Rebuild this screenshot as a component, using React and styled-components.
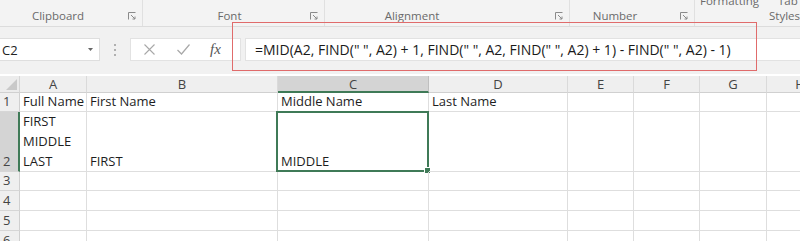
import React from "react";
import styled, { createGlobalStyle } from "styled-components";

const Global = createGlobalStyle`
  html, body { margin: 0; padding: 0; background: #fff; }
  body { font-family: "Open Sans", "Noto Sans", sans-serif; }
`;

const Page = styled.div`
  position: relative;
  width: 800px;
  height: 241px;
  overflow: hidden;
  background: #fff;
`;

const Ribbon = styled.div`
  display: flex;
  height: 26px;
  background: #f3f3f3;
  border-bottom: 1px solid #dcdcdc;
`;

const Group = styled.div`
  position: relative;
  flex: 0 0 ${(p) => p.$w}px;
  display: flex;
  align-items: flex-end;
  justify-content: center;
  padding-bottom: 3px;
  box-sizing: border-box;
  border-right: ${(p) => (p.$last ? "none" : "1px solid #e0e0e0")};
  color: #6a6a6a;
  font-size: 11.5px;
`;

const GroupLabel = styled.span`
  flex-shrink: 0;
  white-space: nowrap;
  line-height: 14px;
  margin-left: ${(p) => p.$shift || 0}px;
`;

const Launcher = styled.svg`
  position: absolute;
  right: 6px;
  bottom: 6px;
`;

const TopText = styled.span`
  position: absolute;
  top: -6px;
  left: ${(p) => p.$x}px;
  white-space: nowrap;
  font-size: 11.5px;
  color: #6a6a6a;
  line-height: 14px;
`;

const FormulaBar = styled.div`
  display: flex;
  align-items: center;
  height: 47px;
  padding-bottom: 2px;
  box-sizing: border-box;
  background: #f1f1f1;
`;

const NameBox = styled.div`
  display: flex;
  align-items: center;
  justify-content: space-between;
  width: 100px;
  height: 23px;
  box-sizing: border-box;
  background: #fff;
  border: 1px solid #dedede;
  border-left: none;
  padding: 0 6px 0 2px;
  font-size: 13px;
  color: #222;
`;

const Dots = styled.div`
  display: flex;
  flex-direction: column;
  gap: 3px;
  margin: 0 14px 0 14px;
`;

const Dot = styled.span`
  width: 2px;
  height: 2px;
  background: #b0b0b0;
`;

const FxBox = styled.div`
  display: flex;
  align-items: center;
  width: 111px;
  height: 23px;
  box-sizing: border-box;
  background: #fff;
  border: 1px solid #e2e2e2;
  padding-left: 13px;
  gap: 22px;
`;

const Fx = styled.span`
  font-family: "Liberation Serif", serif;
  font-style: italic;
  font-size: 15px;
  color: #555;
  margin-left: -2px;
`;

const Input = styled.div`
  flex: 1;
  margin-left: 4px;
  height: 23px;
  box-sizing: border-box;
  background: #fff;
  border: 1px solid #e2e2e2;
  border-right: none;
  display: flex;
  align-items: center;
  padding-left: 9px;
  font-size: 14px;
  color: #1a1a1a;
  white-space: nowrap;
`;

const Annotation = styled.div`
  position: absolute;
  left: 232px;
  top: 22px;
  width: 525px;
  height: 49px;
  box-sizing: border-box;
  border: 1.5px solid #e06b6b;
  pointer-events: none;
`;

const Sheet = styled.div`
  display: grid;
  width: 834px;
  grid-template-columns: 20px 67px 191px 151px 139px 66px 66px 67px 67px;
  grid-template-rows: 17px 19px 60px 19px 20px 20px 20px;
  margin-top: 2px;
`;

const Corner = styled.div`
  position: relative;
  background: #ececec;
  border-right: 1px solid #d6d6d6;
  border-bottom: 1px solid #d0d0d0;
  &::after {
    content: "";
    position: absolute;
    right: 2px;
    bottom: 2px;
    border-style: solid;
    border-width: 0 0 11px 11px;
    border-color: transparent transparent #c9c9c9 transparent;
  }
`;

const ColHead = styled.div`
  display: flex;
  align-items: center;
  justify-content: center;
  background: ${(p) => (p.$sel ? "#d4d4d4" : "#efefef")};
  border-right: 1px solid ${(p) => (p.$sel ? "#bfbfbf" : "#dadada")};
  border-bottom: ${(p) => (p.$sel ? "2px solid #3f7a57" : "1px solid #d0d0d0")};
  font-size: 13px;
  color: #444;
  line-height: 1;
  padding-top: 1px;
`;

const RowHead = styled.div`
  display: flex;
  align-items: flex-end;
  padding-left: 3px;
  background: ${(p) => (p.$sel ? "#d4d4d4" : "#efefef")};
  border-right: ${(p) => (p.$sel ? "2px solid #3f7a57" : "1px solid #d0d0d0")};
  border-bottom: 1px solid #d6d6d6;
  font-size: 13px;
  color: #444;
  line-height: 19px;
`;

const Cell = styled.div`
  position: relative;
  display: flex;
  flex-direction: column;
  justify-content: flex-end;
  padding-left: 3px;
  border-right: 1px solid #dedede;
  border-bottom: 1px solid #dedede;
  font-size: 13px;
  color: #1e1e1e;
  line-height: 20px;
  white-space: nowrap;
  overflow: visible;
  min-width: 0;
`;

const Selected = styled.div`
  position: absolute;
  left: -2px;
  top: -1px;
  right: -1px;
  bottom: -1px;
  border: 2px solid #3f7a57;
  pointer-events: none;
  &::after {
    content: "";
    position: absolute;
    right: -4px;
    bottom: -4px;
    width: 5px;
    height: 5px;
    background: #3f7a57;
    border: 1px solid #fff;
  }
`;

const LaunchIcon = () => (
  <Launcher width="8" height="8" viewBox="0 0 8 8">
    <path d="M0.5 7.5V0.5H7.5" fill="none" stroke="#8a8a8a" strokeWidth="1" />
    <path d="M3 3L7 7M7 4.5V7H4.5" fill="none" stroke="#8a8a8a" strokeWidth="1" />
  </Launcher>
);

const cols = ["A", "B", "C", "D", "E", "F", "G", "H"];

const rows = [
  { n: "1", cells: ["Full Name", "First Name", "Middle Name", "Last Name"] },
  { n: "2", sel: true, cells: [["FIRST", "MIDDLE", "LAST"], "FIRST", "MIDDLE", ""] },
  { n: "3", cells: [] },
  { n: "4", cells: [] },
  { n: "5", cells: [] },
  { n: "6", cells: [] },
];

export default function App() {
  return (
    <Page>
      <Global />
      <Ribbon>
        <Group $w={143}>
          <GroupLabel $shift={-26}>Clipboard</GroupLabel>
          <LaunchIcon />
        </Group>
        <Group $w={182}>
          <GroupLabel $shift={-8}>Font</GroupLabel>
          <LaunchIcon />
        </Group>
        <Group $w={245}>
          <GroupLabel $shift={-70}>Alignment</GroupLabel>
          <LaunchIcon />
        </Group>
        <Group $w={125}>
          <GroupLabel $shift={-34}>Number</GroupLabel>
          <LaunchIcon />
        </Group>
        <Group $w={105} $last>
          <TopText $x={5}>Formatting</TopText>
          <TopText $x={83}>Tab</TopText>
          <GroupLabel $shift={74}>Styles</GroupLabel>
        </Group>
      </Ribbon>
      <FormulaBar>
        <NameBox>
          <span>C2</span>
          <svg width="5" height="3" viewBox="0 0 5 3">
            <path d="M0 0H5L2.5 3Z" fill="#666" />
          </svg>
        </NameBox>
        <Dots>
          <Dot />
          <Dot />
          <Dot />
        </Dots>
        <FxBox>
          <svg width="11" height="11" viewBox="0 0 11 11">
            <path d="M0.5 0.5L10.5 10.5M10.5 0.5L0.5 10.5" stroke="#a8a8a8" strokeWidth="1.1" fill="none" />
          </svg>
          <svg width="13" height="11" viewBox="0 0 13 11">
            <path d="M0.5 6L4.5 10L12.5 0.5" stroke="#a8a8a8" strokeWidth="1.2" fill="none" />
          </svg>
          <Fx>fx</Fx>
        </FxBox>
        <Input>=MID(A2, FIND(" ", A2) + 1, FIND(" ", A2, FIND(" ", A2) + 1) - FIND(" ", A2) - 1)</Input>
      </FormulaBar>
      <Annotation />
      <Sheet>
        <Corner />
        {cols.map((c) => (
          <ColHead key={c} $sel={c === "C"}>{c}</ColHead>
        ))}
        {rows.map((r) => (
          <React.Fragment key={r.n}>
            <RowHead $sel={r.sel}>{r.n}</RowHead>
            {cols.map((c, i) => {
              const v = r.cells[i];
              return (
                <Cell key={c}>
                  {Array.isArray(v) ? v.map((t) => <span key={t}>{t}</span>) : v}
                  {r.sel && c === "C" && <Selected />}
                </Cell>
              );
            })}
          </React.Fragment>
        ))}
      </Sheet>
    </Page>
  );
}
